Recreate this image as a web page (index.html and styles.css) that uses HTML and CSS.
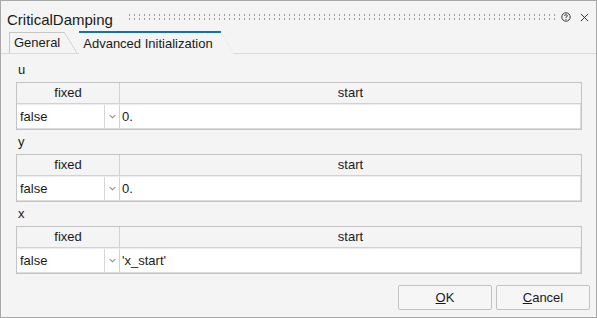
FILE: index.html
```html
<!DOCTYPE html>
<html lang="en">
  <head>
    <meta charset="UTF-8" />
    <title>CriticalDamping</title>
    <link rel="stylesheet" href="styles.css">
  </head>

  <body>
    <div class="dialog">
      <div class="titlebar">
        <span class="title">CriticalDamping</span>
        <span class="grip"></span>
        <svg class="tb-icon" viewBox="0 0 10 10">
          <circle cx="5" cy="5" r="4.2" fill="none" stroke="#333" stroke-width="1" />
          <path d="M3.6 4 Q3.6 2.7 5 2.7 Q6.4 2.7 6.4 3.9 Q6.4 4.7 5 5.2 L5 6" fill="none" stroke="#333" stroke-width="0.9" />
          <circle cx="5" cy="7.3" r="0.6" fill="#333" />
        </svg>
        <svg class="tb-icon tb-icon--close" viewBox="0 0 10 10">
          <path d="M1 1 L9 9 M9 1 L1 9" stroke="#333" stroke-width="1.1" />
        </svg>
      </div>

      <div class="tabs">
        <div class="tab">General</div>
        <div class="tab tab--active">Advanced Initialization</div>
      </div>

      <div class="content">
        <div class="var">
          <div class="var-name">u</div>
          <div class="grid">
            <div class="head head--fixed">fixed</div>
            <div class="head">start</div>
            <div class="cell cell--select">
              <span class="select-value">false</span>
              <span class="select-arrow">
                <svg viewBox="0 0 7 4"><path d="M0 0 L3.5 3.5 L7 0 L5.6 0 L3.5 2 L1.4 0 Z" fill="#8c8c8c" /></svg>
              </span>
            </div>
            <div class="cell cell--input">0.</div>
          </div>
        </div>

        <div class="var">
          <div class="var-name">y</div>
          <div class="grid">
            <div class="head head--fixed">fixed</div>
            <div class="head">start</div>
            <div class="cell cell--select">
              <span class="select-value">false</span>
              <span class="select-arrow">
                <svg viewBox="0 0 7 4"><path d="M0 0 L3.5 3.5 L7 0 L5.6 0 L3.5 2 L1.4 0 Z" fill="#8c8c8c" /></svg>
              </span>
            </div>
            <div class="cell cell--input">0.</div>
          </div>
        </div>

        <div class="var">
          <div class="var-name">x</div>
          <div class="grid">
            <div class="head head--fixed">fixed</div>
            <div class="head">start</div>
            <div class="cell cell--select">
              <span class="select-value">false</span>
              <span class="select-arrow">
                <svg viewBox="0 0 7 4"><path d="M0 0 L3.5 3.5 L7 0 L5.6 0 L3.5 2 L1.4 0 Z" fill="#8c8c8c" /></svg>
              </span>
            </div>
            <div class="cell cell--input">'x_start'</div>
          </div>
        </div>
      </div>

      <div class="footer">
        <button class="btn"><u>O</u>K</button>
        <button class="btn"><u>C</u>ancel</button>
      </div>
    </div>
  </body>
</html>
```

FILE: styles.css
```css
* {
  margin: 0;
  padding: 0;
  box-sizing: border-box;
}

body {
  font-family: "Liberation Sans", Arial, sans-serif;
  font-size: 13px;
  color: #1a1a1a;
  background: #f4f4f4;
}

.dialog {
  width: 597px;
  height: 318px;
  border: 1px solid #a8a8a8;
  background: #f4f4f4;
  display: flex;
  flex-direction: column;
}

/* TITLE BAR */
.titlebar {
  height: 30px;
  padding-left: 6px;
  display: flex;
  align-items: center;
}
.title {
  font-size: 15px;
  line-height: 18px;
  margin-top: 8px;
}
.grip {
  flex: 1;
  height: 6px;
  margin: 2px 6px 0 15px;
  background-image: radial-gradient(circle, #9c9c9c 0.9px, transparent 1.1px);
  background-size: 5px 4px;
  background-position: -1px -1px;
}
.tb-icon {
  width: 10px;
  height: 10px;
  margin-top: 2px;
  margin-right: 9px;
}
.tb-icon--close {
  width: 9px;
  height: 9px;
  margin-right: 7px;
}

/* TABS */
.tabs {
  height: 23px;
  padding-left: 8px;
  display: flex;
  align-items: flex-start;
  border-bottom: 1px solid #dadada;
}
.tab {
  position: relative;
  height: 21px;
  margin-top: 1px;
  margin-right: 15px;
  padding: 0 4px 0 4px;
  line-height: 20px;
  border-top: 1px solid #c6c6c6;
  border-left: 1px solid #c6c6c6;
}
.tab::after {
  content: "";
  position: absolute;
  top: -1px;
  bottom: 0;
  right: -13px;
  width: 13px;
  background: linear-gradient(to top right, transparent calc(50% - 0.6px), #c6c6c6 50%, transparent calc(50% + 0.6px));
}
.tab--active {
  height: 23px;
  margin-top: 0;
  margin-bottom: -1px;
  padding: 0 8px 0 4px;
  line-height: 21px;
  border-top: 2px solid #1174ad;
  border-left: none;
  background: #f4f4f4;
}
.tab--active::after {
  top: -1px;
  background: linear-gradient(to top right, transparent calc(50% - 0.6px), #c6c6c6 50%, transparent calc(50% + 0.6px)), #f4f4f4;
  clip-path: polygon(0 0, 100% 100%, 0 100%);
}

/* VARIABLES */
.content {
  padding: 8px 14px 0 15px;
}
.var {
  margin-bottom: 4px;
}
.var-name {
  height: 16px;
  line-height: 16px;
  padding-left: 2px;
  margin-bottom: 4px;
}
.grid {
  display: grid;
  grid-template-columns: 103px 1fr;
  border: 1px solid #c4c4c4;
}
.head {
  height: 21px;
  line-height: 20px;
  text-align: center;
  border-bottom: 1px solid #d2d2d2;
}
.head--fixed,
.cell--select {
  border-right: 1px solid #d2d2d2;
}
.cell {
  height: 25px;
  line-height: 23px;
  background: #fff;
  border-top: 1px solid #ececec;
  border-bottom: 1px solid #dcdcdc;
}
.cell--select {
  display: flex;
}
.select-value {
  flex: 1;
  padding-left: 3px;
}
.select-arrow {
  width: 15px;
  border-left: 1px solid #d6d6d6;
  display: flex;
  align-items: center;
  justify-content: center;
}
.select-arrow svg {
  width: 7px;
  height: 4px;
}
.cell--input {
  padding-left: 2px;
  border-right: 1px solid #dcdcdc;
}

/* BUTTONS */
.footer {
  margin-top: auto;
  padding: 0 6px 7px 0;
  display: flex;
  justify-content: flex-end;
  gap: 4px;
}
.btn {
  width: 94px;
  height: 25px;
  font-family: inherit;
  font-size: 13px;
  color: #1a1a1a;
  background: #f6f6f6;
  border: 1px solid #c2c2c2;
  border-radius: 2px;
}
```
